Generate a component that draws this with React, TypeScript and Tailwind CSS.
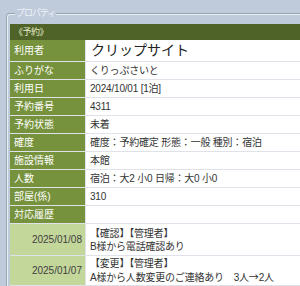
import type { ReactNode } from "react";

const rows: [string, string][] = [
  ["ふりがな", "くりっぷさいと"],
  ["利用日", "2024/10/01 [1泊]"],
  ["予約番号", "4311"],
  ["予約状態", "未着"],
  ["確度", "確度：予約確定 形態：一般 種別：宿泊"],
  ["施設情報", "本館"],
  ["人数", "宿泊：大2 小0 日帰：大0 小0"],
  ["部屋(係)", "310"],
];

const history: { date: string; head: string; body: ReactNode }[] = [
  { date: "2025/01/08", head: "【確認】【管理者】", body: "B様から電話確認あり" },
  {
    date: "2025/01/07",
    head: "【変更】【管理者】",
    body: (
      <>
        A様から人数変更のご連絡あり　3人<span className="font-['Noto_Sans_CJK_JP']">→</span>2人
      </>
    ),
  },
];

export default function App() {
  return (
    <div className="w-[300px] h-[286px] overflow-hidden bg-[#bfcbdb] font-['Liberation_Sans','Noto_Sans_CJK_JP',sans-serif]">
      <div className="relative ml-[6px] mt-[13px] w-[330px] h-[300px] rounded-[3px] border border-[#96a3b4] shadow-[inset_1px_1px_0_#e9eef4]">
        <span className="absolute left-[8px] -top-[7px] bg-[#bfcbdb] px-[1px] text-[9px] leading-[12px] tracking-[-1px] text-[#eef2f7]">
          プロパティ
        </span>
        <div className="ml-[3px] mt-[10px] bg-white">
          <div className="h-[16px] bg-[#4f6228] pl-[4px] text-[9px] leading-[16px] tracking-[-0.5px] text-[#e3ecc9]">
            《予約》
          </div>
          <div className="flex h-[22px] border-b border-[#dfe3e9]">
            <div className="w-[76px] shrink-0 border-r border-[#dfe3e9] bg-[#76923c] pl-[4px] text-[10px] leading-[21px] text-white">
              利用者
            </div>
            <div className="pl-[5px] text-[14px] leading-[21px] text-[#222]">クリップサイト</div>
          </div>
          {rows.map(([label, value]) => (
            <div key={label} className="flex h-[18px] border-b border-[#dfe3e9]">
              <div className="w-[76px] shrink-0 border-r border-[#dfe3e9] bg-[#76923c] pl-[4px] text-[10px] leading-[17px] text-white">
                {label}
              </div>
              <div className="pl-[4px] text-[10px] leading-[17px] tracking-[-0.2px] whitespace-nowrap text-[#333]">{value}</div>
            </div>
          ))}
          <div className="flex h-[18px] border-b border-[#dfe3e9]">
            <div className="w-[76px] shrink-0 border-r border-[#dfe3e9] bg-[#76923c] pl-[4px] text-[10px] leading-[17px] text-white">
              対応履歴
            </div>
            <div />
          </div>
          {history.map((h, i) => (
            <div key={h.date} className={`flex border-b border-[#dfe3e9] ${i === 0 ? "h-[32px]" : "h-[30px]"}`}>
              <div className="flex w-[76px] shrink-0 items-center justify-end border-r border-[#dfe3e9] bg-[#c4d79b] pr-[3px] text-[10px] text-[#3f3f3f]">
                {h.date}
              </div>
              <div className="flex flex-col justify-center pl-[4px] text-[10px] leading-[13px] tracking-[-0.2px] whitespace-nowrap text-[#333]">
                <div>{h.head}</div>
                <div>{h.body}</div>
              </div>
            </div>
          ))}
        </div>
      </div>
    </div>
  );
}
